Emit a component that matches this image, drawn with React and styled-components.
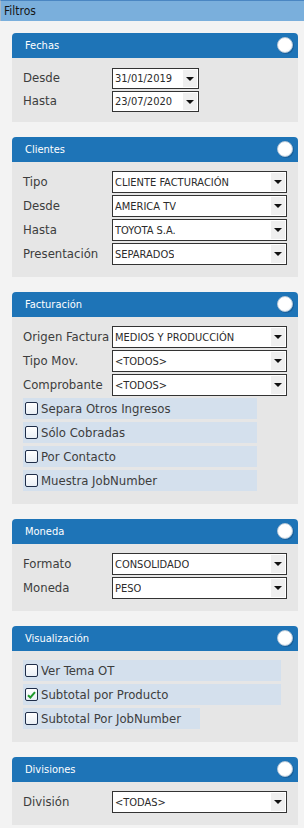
import React from "react";
import styled, { createGlobalStyle } from "styled-components";

const GlobalStyle = createGlobalStyle`
    body {
        margin: 0;
        background-color: #f3f3f3;
        font-family: "DejaVu Sans Condensed", "DejaVu Sans", sans-serif;
        font-stretch: condensed;
    }
`;

const Page = styled.div`
    width: 304px;
    min-height: 828px;
    background-color: #f3f3f3;
`;

const TopBar = styled.div`
    height: 20px;
    border-top: 1px solid #4a86c2;
    border-left: 1px solid #a9b8c6;
    background-color: #7aafdc;
    padding-left: 3px;
    display: flex;
    align-items: center;
    font-size: 12px;
    color: #161616;
`;

const Content = styled.div`
    padding: 12px 6px 0 12px;
`;

const Panel = styled.div`
    width: 286px;
    margin-bottom: 15px;
`;

const PanelHeader = styled.div`
    height: 25px;
    background-color: #1e74b7;
    border-radius: 4px 4px 0 0;
    padding: 0 5px 0 13px;
    display: flex;
    align-items: center;
    justify-content: space-between;
    color: #ffffff;
    font-size: 11px;
`;

const Toggle = styled.span`
    width: 14px;
    height: 14px;
    border-radius: 50%;
    background: radial-gradient(circle at 40% 35%, #ffffff 60%, #e6edf4 100%);
    border: 1px solid #b9c9d8;
    box-shadow: 1px 1px 0 rgba(20, 60, 100, 0.35);
    margin-top: -2px;
`;

const PanelBody = styled.div`
    background-color: #e6e6e6;
    padding: ${(p) => (p.$compact ? "10px 11px 8px" : "9px 11px 10px")};
`;

const Row = styled.div`
    display: flex;
    align-items: flex-start;
    height: ${(p) => (p.$compact ? "23px" : "24px")};
`;

const Label = styled.div`
    width: 89px;
    height: ${(p) => (p.$compact ? "21px" : "22px")};
    display: flex;
    align-items: center;
    font-size: 13px;
    color: #3d3d3d;
    white-space: nowrap;
    margin-top: -1px;
`;

const SelectBox = styled.div`
    box-sizing: border-box;
    width: ${(p) => p.$width}px;
    height: ${(p) => (p.$compact ? "21px" : "22px")};
    border: 1px solid #333333;
    background-color: #ffffff;
    display: flex;
    align-items: center;
    justify-content: space-between;
    padding-left: 2px;
`;

const SelectText = styled.span`
    font-size: 11px;
    color: #2b2b2b;
    white-space: nowrap;
    overflow: hidden;
`;

const ArrowArea = styled.span`
    align-self: stretch;
    width: 14px;
    margin: 1px 1px 1px 0;
    background-color: #efefef;
    display: flex;
    align-items: center;
    justify-content: center;

    &::after {
        content: "";
        border-left: 4px solid transparent;
        border-right: 4px solid transparent;
        border-top: 4px solid #111111;
    }
`;

const CheckRow = styled.div`
    box-sizing: border-box;
    width: ${(p) => p.$width}px;
    height: 21px;
    margin-bottom: 3px;
    background-color: #d4e0ed;
    display: flex;
    align-items: center;
    padding-left: 2px;
    gap: 3px;
    font-size: 13px;
    color: #3d3d3d;
`;

const CheckBox = styled.span`
    box-sizing: border-box;
    width: 13px;
    height: 13px;
    border: 1px solid #1f2d48;
    border-radius: 2px;
    background: linear-gradient(#ffffff, #e9eef4);
    display: flex;
    align-items: center;
    justify-content: center;
`;

function Select({ value, width = 175, compact }) {
    return (
        <SelectBox $width={width} $compact={compact}>
            <SelectText>{value}</SelectText>
            <ArrowArea />
        </SelectBox>
    );
}

function Field({ label, value, width, compact }) {
    return (
        <Row $compact={compact}>
            <Label $compact={compact}>{label}</Label>
            <Select value={value} width={width} compact={compact} />
        </Row>
    );
}

function Check({ label, width, checked }) {
    return (
        <CheckRow $width={width}>
            <CheckBox>
                {checked && (
                    <svg width="9" height="8" viewBox="0 0 9 8">
                        <path d="M1 4.2 L3.4 6.5 L8 1.2" fill="none" stroke="#1f9a2a" strokeWidth="2" />
                    </svg>
                )}
            </CheckBox>
            {label}
        </CheckRow>
    );
}

function Section({ title, compact, children }) {
    return (
        <Panel>
            <PanelHeader>
                {title}
                <Toggle />
            </PanelHeader>
            <PanelBody $compact={compact}>{children}</PanelBody>
        </Panel>
    );
}

export default function App() {
    return (
        <Page>
            <GlobalStyle />
            <TopBar>Filtros</TopBar>
            <Content>
                <Section title="Fechas" compact>
                    <Field label="Desde" value="31/01/2019" width={87} compact />
                    <Field label="Hasta" value="23/07/2020" width={87} compact />
                </Section>

                <Section title="Clientes">
                    <Field label="Tipo" value="CLIENTE FACTURACIÓN" />
                    <Field label="Desde" value="AMERICA TV" />
                    <Field label="Hasta" value="TOYOTA S.A." />
                    <Field label="Presentación" value="SEPARADOS" />
                </Section>

                <Section title="Facturación">
                    <Field label="Origen Factura" value="MEDIOS Y PRODUCCIÓN" />
                    <Field label="Tipo Mov." value="<TODOS>" />
                    <Field label="Comprobante" value="<TODOS>" />
                    <Check label="Separa Otros Ingresos" width={234} />
                    <Check label="Sólo Cobradas" width={234} />
                    <Check label="Por Contacto" width={234} />
                    <Check label="Muestra JobNumber" width={234} />
                </Section>

                <Section title="Moneda">
                    <Field label="Formato" value="CONSOLIDADO" />
                    <Field label="Moneda" value="PESO" />
                </Section>

                <Section title="Visualización">
                    <Check label="Ver Tema OT" width={258} />
                    <Check label="Subtotal por Producto" width={258} checked />
                    <Check label="Subtotal Por JobNumber" width={177} />
                </Section>

                <Section title="Divisiones">
                    <Field label="División" value="<TODAS>" />
                </Section>
            </Content>
        </Page>
    );
}
